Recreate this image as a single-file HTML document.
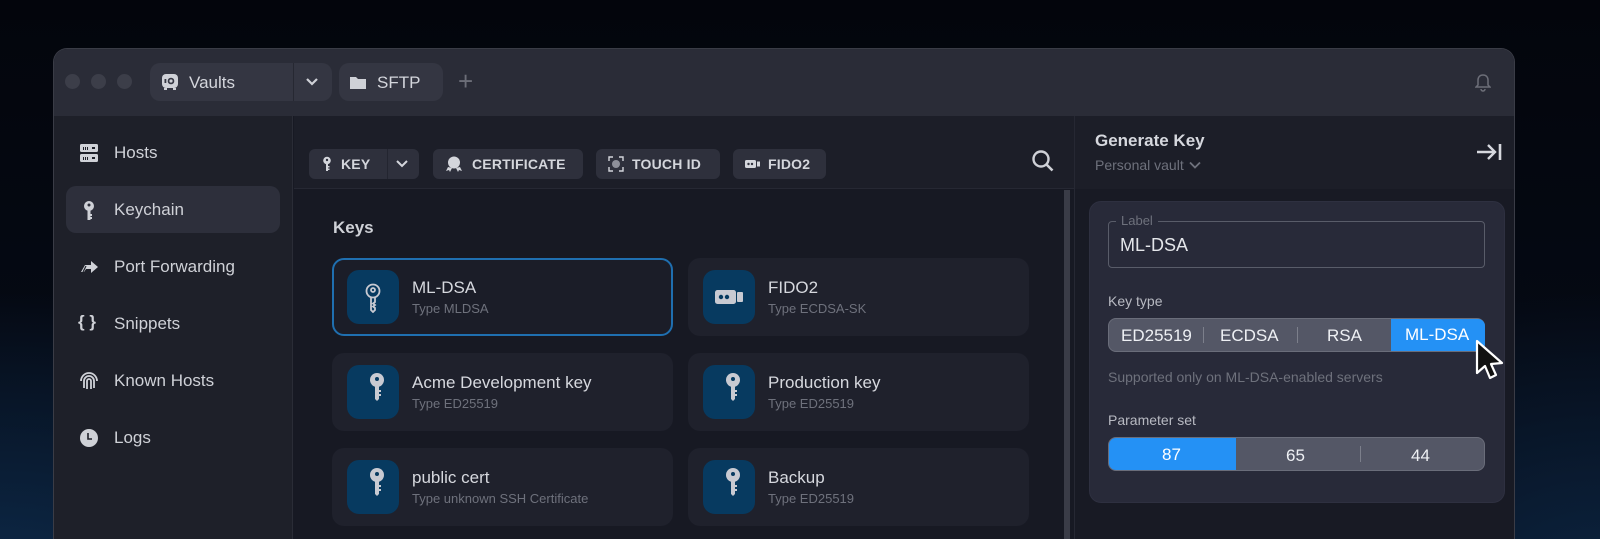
<!DOCTYPE html>
<html style="width:1600px;height:539px;overflow:hidden;background:#060c18"><head><meta charset="utf-8"><style>
*{box-sizing:border-box;margin:0;padding:0}
body{width:1600px;height:539px;overflow:hidden;font-family:"Liberation Sans",sans-serif;
background:radial-gradient(ellipse 500px 300px at 0% 110%,#0d2a4a 0%,rgba(8,20,40,0) 100%),radial-gradient(ellipse 400px 300px at 100% 110%,#0c2440 0%,rgba(8,20,40,0) 100%),linear-gradient(#03050c,#060c18);position:relative;color:#d6d8de}
.abs{position:absolute}
.win{left:53px;top:48px;width:1462px;height:491px;border-radius:14px 14px 0 0;overflow:hidden;background:#171923;border:1px solid #3a3c46;border-bottom:none}
.title{left:0;top:0;width:1462px;height:67px;background:#2a2c37}
.dot{width:15px;height:15px;border-radius:50%;background:#3c3e49;top:25px}
.pill{background:#343642;border-radius:10px;height:38px;top:14px}
.side{left:0;top:67px;width:239px;height:440px;background:#1e2029;border-right:1px solid #2a2c36}
.nav{left:12px;width:214px;height:47px;border-radius:10px;font-size:17px;color:#cfd1d7;display:flex;align-items:center;padding-left:48px}
.nav svg{position:absolute;left:13px;top:14px}
.tb{left:240px;top:67px;width:780px;height:73px;background:#1c1e28;border-bottom:1px solid #262833}
.btn{background:#2e303c;border-radius:6px;height:30px;top:100px;font-size:14px;font-weight:bold;color:#d4d6dc;display:flex;align-items:center;letter-spacing:.2px}
.card{width:341px;height:78px;border-radius:12px;background:#1f212c}
.card .ic{position:absolute;left:15px;top:12px;width:52px;height:54px;border-radius:12px;background:#073a60}
.card .t{position:absolute;left:80px;top:20px;font-size:17px;color:#d6d8de}
.card .s{position:absolute;left:80px;top:43px;font-size:13px;color:#6e717c}
.rp{left:1020px;top:67px;width:442px;height:440px;background:#1c1e28;border-left:1px solid #262833}
.seg{height:32px;border-radius:8px;background:#545766;border:1px solid #6a6d7a}
</style></head><body>
<div class="abs win">
 <div class="abs title">
  <div class="abs dot" style="left:11px"></div><div class="abs dot" style="left:37px"></div><div class="abs dot" style="left:63px"></div>
  <div class="abs pill" style="left:96px;width:182px"></div>
  <div class="abs" style="left:239px;top:14px;width:1px;height:38px;background:#262832"></div>
  <svg class="abs" style="left:107px;top:24px" width="18" height="18" viewBox="0 0 18 18"><rect x="1" y="1" width="16" height="14" rx="4" fill="#cfd1d7"/><circle cx="10" cy="8" r="3.3" fill="#343642"/><circle cx="10" cy="8" r="1.6" fill="#cfd1d7"/><rect x="3.5" y="6" width="1.8" height="4" fill="#343642"/><rect x="3" y="15" width="3" height="2" fill="#cfd1d7"/><rect x="12" y="15" width="3" height="2" fill="#cfd1d7"/></svg>
  <div class="abs" style="left:135px;top:24px;font-size:17px;color:#d4d6dc">Vaults</div>
  <svg class="abs" style="left:251px;top:28px" width="14" height="10" viewBox="0 0 14 10"><path d="M2 2l5 5 5-5" stroke="#cfd1d7" stroke-width="2.2" fill="none"/></svg>
  <div class="abs pill" style="left:285px;width:104px"></div>
  <svg class="abs" style="left:296px;top:27px" width="16" height="13" viewBox="0 0 16 13"><path d="M0 1h6l2 2h8v10H0z" fill="#cfd1d7"/></svg>
  <div class="abs" style="left:323px;top:24px;font-size:17px;color:#d4d6dc">SFTP</div>
  <div class="abs" style="left:404px;top:17px;font-size:26px;color:#6c6e78">+</div>
  <svg class="abs" style="left:1421px;top:24px" width="16" height="20" viewBox="0 0 16 20"><path d="M8 2c-3 0-5 2-5 5v5l-2 2h14l-2-2V7c0-3-2-5-5-5zM6 16a2 2 0 0 0 4 0" stroke="#6c6e78" stroke-width="1.5" fill="none"/></svg>
 </div>
 <div class="abs side">
  <div class="abs nav" style="top:13px"><svg width="20" height="20" viewBox="0 0 20 20"><rect x="1" y="1" width="18" height="8" rx="1.5" fill="#cfd1d7"/><rect x="1" y="11" width="18" height="8" rx="1.5" fill="#cfd1d7"/><path d="M4 4h1v3H4zM6 4h1v3H6zM8 4h1v3H8zM4 14h1v3H4zM6 14h1v3H6zM8 14h1v3H8z" fill="#1e2029"/><rect x="13" y="4" width="3" height="2" fill="#1e2029"/><rect x="13" y="14" width="3" height="2" fill="#1e2029"/></svg>Hosts</div>
  <div class="abs nav" style="top:70px;background:#2d2f3b"><svg width="20" height="22" viewBox="0 0 20 22"><circle cx="10" cy="6" r="5" fill="#cfd1d7"/><circle cx="10" cy="5" r="1.5" fill="#2d2f3b"/><path d="M8.5 10h3v10h-3zM11 14h2v2h-2zM11 17h2v2h-2z" fill="#cfd1d7"/></svg>Keychain</div>
  <div class="abs nav" style="top:127px"><svg width="20" height="20" viewBox="0 0 20 20"><path d="M2 15l4-7h6V4l7 6-7 6v-4H7l-2 3z" fill="#cfd1d7"/><path d="M4 15l3-6" stroke="#1e2029" stroke-width="1.2"/></svg>Port Forwarding</div>
  <div class="abs nav" style="top:184px"><span style="position:absolute;left:12px;top:12px;font-weight:bold;font-size:17px">{ }</span>Snippets</div>
  <div class="abs nav" style="top:241px"><svg width="20" height="20" viewBox="0 0 20 20"><g stroke="#cfd1d7" stroke-width="1.8" fill="none"><path d="M2 10a8 8 0 0 1 16 0"/><path d="M5 17v-7a5 5 0 0 1 10 0v7"/><path d="M8 18v-8a2 2 0 0 1 4 0v8"/></g></svg>Known Hosts</div>
  <div class="abs nav" style="top:298px"><svg width="20" height="20" viewBox="0 0 20 20"><circle cx="10" cy="10" r="9" fill="#cfd1d7"/><path d="M9 5v6h4" stroke="#1e2029" stroke-width="1.6" fill="none"/></svg>Logs</div>
 </div>
 <div class="abs tb"></div>
 <div class="abs btn" style="left:255px;width:110px;top:100px"><svg style="margin-left:13px" width="10" height="16" viewBox="0 0 10 16"><circle cx="5" cy="4.5" r="3.8" fill="#d4d6dc"/><circle cx="5" cy="4" r="1.2" fill="#2e303c"/><path d="M4 8h2v7H4zM6 10h1.5v1.5H6zM6 12.5h1.5V14H6z" fill="#d4d6dc"/></svg><span style="margin-left:9px">KEY</span><span style="position:absolute;left:78px;top:0;width:1px;height:30px;background:#232530"></span><svg style="position:absolute;left:86px;top:10px" width="14" height="10" viewBox="0 0 14 10"><path d="M2 2l5 5 5-5" stroke="#d4d6dc" stroke-width="2" fill="none"/></svg></div>
 <div class="abs btn" style="left:379px;width:150px"><svg style="margin-left:12px" width="18" height="18" viewBox="0 0 18 18"><circle cx="9" cy="7.5" r="6" fill="#d4d6dc"/><path d="M3 12l-2 4 3-1 1 2 2-4M15 12l2 4-3-1-1 2-2-4" fill="#d4d6dc"/></svg><span style="margin-left:9px">CERTIFICATE</span></div>
 <div class="abs btn" style="left:542px;width:124px"><svg style="margin-left:12px" width="16" height="16" viewBox="0 0 16 16"><g stroke="#d4d6dc" stroke-width="1.4" fill="none"><path d="M1 5V1h4M11 1h4v4M15 11v4h-4M5 15H1v-4"/></g><circle cx="8" cy="8" r="4" fill="#8e909a"/></svg><span style="margin-left:8px">TOUCH ID</span></div>
 <div class="abs btn" style="left:679px;width:93px"><svg style="margin-left:12px" width="16" height="10" viewBox="0 0 16 10"><rect x="0" y="1" width="11" height="8" rx="1.5" fill="#d4d6dc"/><rect x="12" y="2.5" width="3" height="5" fill="#d4d6dc"/><circle cx="3.5" cy="5" r="1.2" fill="#2e303c"/><circle cx="7" cy="5" r="1.2" fill="#2e303c"/></svg><span style="margin-left:7px">FIDO2</span></div>
 <svg class="abs" style="left:977px;top:100px" width="24" height="24" viewBox="0 0 24 24"><circle cx="10" cy="10" r="7.5" stroke="#cfd1d7" stroke-width="2.4" fill="none"/><path d="M15.5 15.5l6 6" stroke="#cfd1d7" stroke-width="2.6"/></svg>
 <div class="abs" style="left:1010px;top:141px;width:6px;height:370px;background:#3a3c47"></div>
 <div class="abs" style="left:279px;top:169px;font-size:17px;font-weight:bold;color:#cfd1d7">Keys</div>

 <div class="abs card" style="left:278px;top:209px;border:2.5px solid #1f6fb0;background:#1b1d28"><div class="ic" style="left:13px;top:10px"><svg style="position:absolute;left:17px;top:13px" width="18" height="30" viewBox="0 0 18 30"><g stroke="#c8cad2" stroke-width="1.8" fill="none"><circle cx="9" cy="8" r="6.5"/><circle cx="9" cy="7" r="2"/><path d="M7 14v13l2 2 2-2v-2l-2-1.5 2-1.5-2-1.5 2-1.5v-5"/></g></svg></div><div class="t" style="left:78px;top:18px">ML-DSA</div><div class="s" style="left:78px;top:41px">Type MLDSA</div></div>
 <div class="abs card" style="left:634px;top:209px"><div class="ic"><svg style="position:absolute;left:12px;top:19px" width="30" height="16" viewBox="0 0 30 16"><rect x="0" y="1" width="21" height="14" rx="2.5" fill="#c8cad2"/><rect x="22" y="3" width="6" height="10" rx="1" fill="#c8cad2"/><circle cx="6" cy="8" r="2.2" fill="#073a60"/><circle cx="12" cy="8" r="2.2" fill="#073a60"/></svg></div><div class="t">FIDO2</div><div class="s">Type ECDSA-SK</div></div>

 <div class="abs card" style="left:278px;top:304px"><div class="ic"></div><div class="t">Acme Development key</div><div class="s">Type ED25519</div></div>
 <div class="abs card" style="left:634px;top:304px"><div class="ic"></div><div class="t">Production key</div><div class="s">Type ED25519</div></div>
 <div class="abs card" style="left:278px;top:399px"><div class="ic"></div><div class="t">public cert</div><div class="s">Type unknown SSH Certificate</div></div>
 <div class="abs card" style="left:634px;top:399px"><div class="ic"></div><div class="t">Backup</div><div class="s">Type ED25519</div></div>
 <svg class="abs" style="left:315px;top:323px" width="16" height="30" viewBox="0 0 16 30"><circle cx="8" cy="8" r="7" fill="#c8cad2"/><circle cx="8" cy="7" r="2" fill="#073a60"/><path d="M6 13h4v14l-2 2-2-2zM10 18h2v2h-2zM10 22h2v2h-2z" fill="#c8cad2"/></svg>
 <svg class="abs" style="left:671px;top:323px" width="16" height="30" viewBox="0 0 16 30"><circle cx="8" cy="8" r="7" fill="#c8cad2"/><circle cx="8" cy="7" r="2" fill="#073a60"/><path d="M6 13h4v14l-2 2-2-2zM10 18h2v2h-2zM10 22h2v2h-2z" fill="#c8cad2"/></svg>
 <svg class="abs" style="left:315px;top:418px" width="16" height="30" viewBox="0 0 16 30"><circle cx="8" cy="8" r="7" fill="#c8cad2"/><circle cx="8" cy="7" r="2" fill="#073a60"/><path d="M6 13h4v14l-2 2-2-2zM10 18h2v2h-2zM10 22h2v2h-2z" fill="#c8cad2"/></svg>
 <svg class="abs" style="left:671px;top:418px" width="16" height="30" viewBox="0 0 16 30"><circle cx="8" cy="8" r="7" fill="#c8cad2"/><circle cx="8" cy="7" r="2" fill="#073a60"/><path d="M6 13h4v14l-2 2-2-2zM10 18h2v2h-2zM10 22h2v2h-2z" fill="#c8cad2"/></svg>

 <div class="abs rp">
  <div class="abs" style="left:0;top:73px;width:442px;height:370px;background:#181a24"></div>
  <div class="abs" style="left:20px;top:15px;font-size:17px;font-weight:bold;color:#d6d8de">Generate Key</div>
  <div class="abs" style="left:20px;top:41px;font-size:14px;color:#6e717c">Personal vault <svg width="14" height="9" viewBox="0 0 14 9"><path d="M2 1.5l5 5 5-5" stroke="#6e717c" stroke-width="1.8" fill="none"/></svg></div>
  <svg class="abs" style="left:400px;top:26px" width="28" height="20" viewBox="0 0 28 20"><path d="M2 10h18M13 3l7 7-7 7" stroke="#d6d8de" stroke-width="2.4" fill="none"/><path d="M25 2v16" stroke="#d6d8de" stroke-width="2.6"/></svg>
  <div class="abs" style="left:14px;top:85px;width:416px;height:302px;border-radius:12px;background:#282a39;border:1px solid #2e3040"></div>
  <div class="abs" style="left:33px;top:105px;width:377px;height:47px;border:1px solid #595c69;border-radius:4px"></div>
  <div class="abs" style="left:41px;top:97px;padding:0 5px;background:#282a39;font-size:13px;color:#6e717c">Label</div>
  <div class="abs" style="left:45px;top:119px;font-size:18px;color:#e4e6ea">ML-DSA</div>
  <div class="abs" style="left:33px;top:177px;font-size:14px;color:#b8bac2">Key type</div>
  <div class="abs seg" style="left:33px;top:202px;width:377px;height:34px">
   <div class="abs" style="left:282px;top:0;width:94px;height:32px;background:#2491f5;border-radius:0 7px 7px 0"></div>
   <div class="abs" style="left:94px;top:8px;width:1px;height:16px;background:#7c7f8b"></div>
   <div class="abs" style="left:188px;top:8px;width:1px;height:16px;background:#7c7f8b"></div>
   <div class="abs" style="left:12px;top:7px;font-size:17px;color:#eef0f4">ED25519</div>
   <div class="abs" style="left:111px;top:7px;font-size:17px;color:#eef0f4">ECDSA</div>
   <div class="abs" style="left:218px;top:7px;font-size:17px;color:#eef0f4">RSA</div>
   <div class="abs" style="left:296px;top:6px;font-size:17px;color:#fff">ML-DSA</div>
  </div>
  <svg class="abs" style="left:398px;top:222px" width="34" height="46" viewBox="0 0 34 46"><path d="M4 3v32l8-7 5 12 6-3-5-11 11-1z" fill="#111" stroke="#fff" stroke-width="2.2" stroke-linejoin="round"/></svg>
  <div class="abs" style="left:33px;top:253px;font-size:14px;color:#6e717c">Supported only on ML-DSA-enabled servers</div>
  <div class="abs" style="left:33px;top:296px;font-size:14px;color:#b8bac2">Parameter set</div>
  <div class="abs seg" style="left:33px;top:321px;width:377px;height:34px">
   <div class="abs" style="left:0;top:0;width:127px;height:32px;background:#2491f5;border-radius:7px 0 0 7px"></div>
   <div class="abs" style="left:251px;top:8px;width:1px;height:16px;background:#7c7f8b"></div>
   <div class="abs" style="left:53px;top:7px;font-size:17px;color:#fff">87</div>
   <div class="abs" style="left:177px;top:8px;font-size:17px;color:#eef0f4">65</div>
   <div class="abs" style="left:302px;top:8px;font-size:17px;color:#eef0f4">44</div>
  </div>
 </div>
</div>
</body></html>
